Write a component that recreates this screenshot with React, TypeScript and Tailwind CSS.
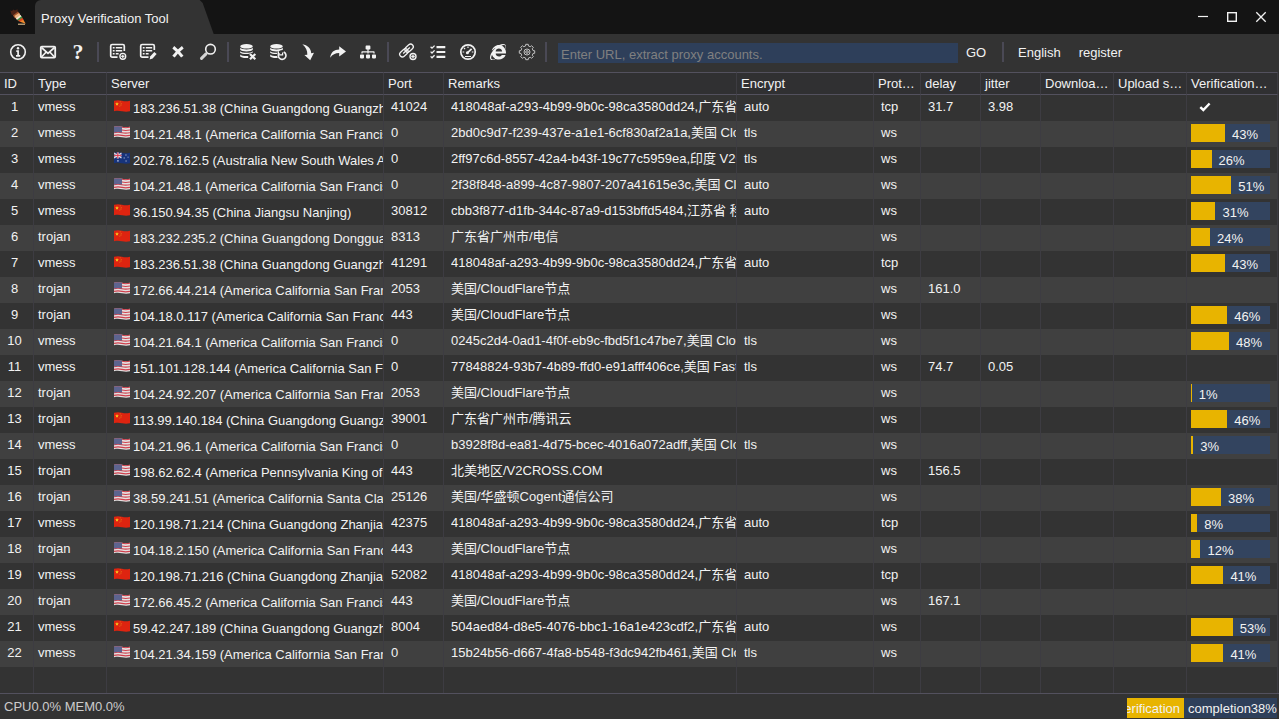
import React from 'react';
import { FaSitemap, FaInternetExplorer } from 'react-icons/fa';

type Country = 'cn' | 'us' | 'au';

interface ProxyRow {
  type: string;
  country: Country;
  server: string;
  port: number;
  remarks: string;
  encrypt?: string;
  protocol: string;
  delay?: string;
  jitter?: string;
  // percentage while the check runs, 'ok' once it has passed
  status?: number | 'ok';
}

const GZ = '418048af-a293-4b99-9b0c-98ca3580dd24,广东省广州市';
const ZJ = '418048af-a293-4b99-9b0c-98ca3580dd24,广东省湛江市';
const SF = '(America California San Francisco)';

const ROWS: ProxyRow[] = [
  { type: 'vmess', country: 'cn', server: '183.236.51.38 (China Guangdong Guangzhou)', port: 41024, remarks: GZ, encrypt: 'auto', protocol: 'tcp', delay: '31.7', jitter: '3.98', status: 'ok' },
  { type: 'vmess', country: 'us', server: `104.21.48.1 ${SF}`, port: 0, remarks: '2bd0c9d7-f239-437e-a1e1-6cf830af2a1a,美国 CloudFlare节点', encrypt: 'tls', protocol: 'ws', status: 43 },
  { type: 'vmess', country: 'au', server: '202.78.162.5 (Australia New South Wales Alexandria)', port: 0, remarks: '2ff97c6d-8557-42a4-b43f-19c77c5959ea,印度 V2CROSS.COM', encrypt: 'tls', protocol: 'ws', status: 26 },
  { type: 'vmess', country: 'us', server: `104.21.48.1 ${SF}`, port: 0, remarks: '2f38f848-a899-4c87-9807-207a41615e3c,美国 CloudFlare节点', encrypt: 'auto', protocol: 'ws', status: 51 },
  { type: 'vmess', country: 'cn', server: '36.150.94.35 (China Jiangsu Nanjing)', port: 30812, remarks: 'cbb3f877-d1fb-344c-87a9-d153bffd5484,江苏省 移动', encrypt: 'auto', protocol: 'ws', status: 31 },
  { type: 'trojan', country: 'cn', server: '183.232.235.2 (China Guangdong Dongguan)', port: 8313, remarks: '广东省广州市/电信', protocol: 'ws', status: 24 },
  { type: 'vmess', country: 'cn', server: '183.236.51.38 (China Guangdong Guangzhou)', port: 41291, remarks: GZ, encrypt: 'auto', protocol: 'tcp', status: 43 },
  { type: 'trojan', country: 'us', server: `172.66.44.214 ${SF}`, port: 2053, remarks: '美国/CloudFlare节点', protocol: 'ws', delay: '161.0' },
  { type: 'trojan', country: 'us', server: `104.18.0.117 ${SF}`, port: 443, remarks: '美国/CloudFlare节点', protocol: 'ws', status: 46 },
  { type: 'vmess', country: 'us', server: `104.21.64.1 ${SF}`, port: 0, remarks: '0245c2d4-0ad1-4f0f-eb9c-fbd5f1c47be7,美国 CloudFlare节点', encrypt: 'tls', protocol: 'ws', status: 48 },
  { type: 'vmess', country: 'us', server: `151.101.128.144 ${SF}`, port: 0, remarks: '77848824-93b7-4b89-ffd0-e91afff406ce,美国 Fastly节点', encrypt: 'tls', protocol: 'ws', delay: '74.7', jitter: '0.05' },
  { type: 'trojan', country: 'us', server: `104.24.92.207 ${SF}`, port: 2053, remarks: '美国/CloudFlare节点', protocol: 'ws', status: 1 },
  { type: 'trojan', country: 'cn', server: '113.99.140.184 (China Guangdong Guangzhou)', port: 39001, remarks: '广东省广州市/腾讯云', protocol: 'ws', status: 46 },
  { type: 'vmess', country: 'us', server: `104.21.96.1 ${SF}`, port: 0, remarks: 'b3928f8d-ea81-4d75-bcec-4016a072adff,美国 CloudFlare节点', encrypt: 'tls', protocol: 'ws', status: 3 },
  { type: 'trojan', country: 'us', server: '198.62.62.4 (America Pennsylvania King of Prussia)', port: 443, remarks: '北美地区/V2CROSS.COM', protocol: 'ws', delay: '156.5' },
  { type: 'trojan', country: 'us', server: '38.59.241.51 (America California Santa Clara)', port: 25126, remarks: '美国/华盛顿Cogent通信公司', protocol: 'ws', status: 38 },
  { type: 'vmess', country: 'cn', server: '120.198.71.214 (China Guangdong Zhanjiang)', port: 42375, remarks: ZJ, encrypt: 'auto', protocol: 'tcp', status: 8 },
  { type: 'trojan', country: 'us', server: `104.18.2.150 ${SF}`, port: 443, remarks: '美国/CloudFlare节点', protocol: 'ws', status: 12 },
  { type: 'vmess', country: 'cn', server: '120.198.71.216 (China Guangdong Zhanjiang)', port: 52082, remarks: ZJ, encrypt: 'auto', protocol: 'tcp', status: 41 },
  { type: 'trojan', country: 'us', server: `172.66.45.2 ${SF}`, port: 443, remarks: '美国/CloudFlare节点', protocol: 'ws', delay: '167.1' },
  { type: 'vmess', country: 'cn', server: '59.42.247.189 (China Guangdong Guangzhou)', port: 8004, remarks: '504aed84-d8e5-4076-bbc1-16a1e423cdf2,广东省广州市', encrypt: 'auto', protocol: 'ws', status: 53 },
  { type: 'vmess', country: 'us', server: `104.21.34.159 ${SF}`, port: 0, remarks: '15b24b56-d667-4fa8-b548-f3dc942fb461,美国 CloudFlare节点', encrypt: 'tls', protocol: 'ws', status: 41 },
];

const COLUMNS = [
  { title: 'ID', width: 'w-[34px]' },
  { title: 'Type', width: 'w-[73px]' },
  { title: 'Server', width: 'w-[277px]' },
  { title: 'Port', width: 'w-[60px]' },
  { title: 'Remarks', width: 'w-[293px]' },
  { title: 'Encrypt', width: 'w-[137px]' },
  { title: 'Protocol', width: 'w-[47px]' },
  { title: 'delay', width: 'w-[60px]' },
  { title: 'jitter', width: 'w-[60px]' },
  { title: 'Download speed', width: 'w-[73px]' },
  { title: 'Upload speed', width: 'w-[73px]' },
  { title: 'Verification…', width: '' },
];

/* ---------- icons, all on a 20px grid ---------- */

const Svg: React.FC<{ children: React.ReactNode }> = ({ children }) => (
  <svg viewBox="0 0 20 20" className="w-5 h-5" fill="none" stroke="currentColor" strokeWidth="1.5" aria-hidden="true">
    {children}
  </svg>
);

const InfoIcon = () => (
  <Svg>
    <circle cx="10" cy="10" r="7.3" strokeWidth="1.6" />
    <circle cx="10" cy="6.3" r="1.2" fill="currentColor" stroke="none" />
    <path d="M8.3 9.2h1.8v4.6M8 13.8h4.2" strokeWidth="1.7" />
  </Svg>
);

const MailIcon = () => (
  <Svg>
    <rect x="2.8" y="4.6" width="14.4" height="11" rx="1" strokeWidth="1.8" />
    <path d="M3.5 5.5L10 11.3l6.5-5.8M3.5 15l4.7-5M16.5 15l-4.700-5" strokeWidth="1.7" />
  </Svg>
);

const ListFrame: React.FC<{ d: string }> = ({ d }) => (
  <>
    <path d={d} strokeWidth="1.7" />
    <path d="M4.8 5.7h1.8M4.8 8.7h1.8M4.8 11.7h1.8M7.8 5.7h6.4M7.8 8.7h6.4M7.8 11.7h2.8" />
  </>
);

const ListAddIcon = () => (
  <Svg>
    <ListFrame d="M9.5 15.2H4.2a1.5 1.5 0 0 1-1.5-1.5V4a1.5 1.5 0 0 1 1.5-1.5h10.6A1.5 1.5 0 0 1 16.3 4v5" />
    <circle cx="14.8" cy="14.3" r="3.600" fill="#333333" stroke="none" />
    <circle cx="14.8" cy="14.3" r="2.9" strokeWidth="1.4" />
    <path d="M14.8 12.700v3.200M13.200 14.3h3.200" strokeWidth="1.2" />
  </Svg>
);

const ListEditIcon = () => (
  <Svg>
    <ListFrame d="M10.5 15.2H4.2a1.5 1.5 0 0 1-1.5-1.5V4a1.5 1.5 0 0 1 1.5-1.5h10.600A1.5 1.5 0 0 1 16.3 4v4" />
    <path d="M11.6 17.400l.7-3.100 4-4.400 2.300 2-4 4.500z" fill="currentColor" stroke="none" />
  </Svg>
);

const CloseBoldIcon = () => (
  <Svg>
    <path d="M5.3 5.3c2.8 2.2 6 5.4 9 9.4M14.8 5.3C11.6 7.6 8.2 11 5.5 14.7" strokeWidth="3" />
  </Svg>
);

const SearchIcon = () => (
  <Svg>
    <circle cx="12.5" cy="7.2" r="4.8" strokeWidth="1.6" />
    <path d="M3.5 16.4L8 11.9" strokeWidth="3" strokeLinecap="round" stroke="#d4d4d4" />
  </Svg>
);

const Database = () => (
  <g fill="currentColor" stroke="none">
    <ellipse cx="8.5" cy="4.3" rx="6.3" ry="2.3" />
    <path d="M2.2 5.8c1.6 2.2 11 2.2 12.6 0v2c-1.6 2.2-11 2.2-12.6 0z" />
    <path d="M2.2 9.2c1.6 2.2 11 2.2 12.6 0v1.3l-3.6 1.3c-3 .6-7.8.3-9-1z" />
    <path d="M2.2 12.4c1 1.3 5 1.8 8 1.5V16c-4 .4-7.3-.4-8-1.4z" />
  </g>
);

const DbRemoveIcon = () => (
  <Svg>
    <Database />
    <path d="M12 12l5.300 5.300M17.300 12L12 17.300" strokeWidth="2.200" />
  </Svg>
);

const DbRefreshIcon = () => (
  <Svg>
    <Database />
    <circle cx="14" cy="13.3" r="5" fill="#333333" stroke="none" />
    <path d="M11.3 11.1a3.8 3.8 0 1 0 4.4-1" strokeWidth="1.6" />
    <path d="M10.4 9.2v3.6H14M14.6 10.6v3" strokeWidth="1.2" />
  </Svg>
);

const ArrowDownIcon = () => (
  <Svg>
    <path d="M4.400 2.200c5 .8 8.800 4.200 8.800 9.100l2.800-.6-3.800 7.500-5.800-5.200 2.900-.3C9.600 8.300 7.700 5 4.400 2.200z" fill="currentColor" stroke="none" />
  </Svg>
);

const ForwardIcon = () => (
  <Svg>
    <path d="M2.2 15.8c.5-5.500 4-8.300 9-8.300V4.200L18 9.400l-6.800 5v-3.300c-4 0-6.700 1.500-9 4.700z" fill="currentColor" stroke="none" />
  </Svg>
);

const LinkAddIcon = () => (
  <Svg>
    <g transform="rotate(-42 8.500 8.500)" strokeWidth="1.300">
      <rect x="0.300" y="5.800" width="9.400" height="5.400" rx="2.700" />
      <rect x="7.300" y="5.800" width="9.400" height="5.400" rx="2.700" />
      <path d="M4 8.500h9" />
    </g>
    <circle cx="15" cy="14.500" r="3.600" fill="#333333" stroke="none" />
    <circle cx="15" cy="14.500" r="3" strokeWidth="1.400" />
    <path d="M15 12.700v3.600M13.200 14.500h3.600" strokeWidth="1.300" />
  </Svg>
);

const ChecklistIcon = () => (
  <Svg>
    <path d="M8.5 5.200h8.800M8.5 10h8.800M8.5 14.800h8.800" strokeWidth="2.200" />
    <path d="M2.600 4.800L4 6.200l2.600-2.600M2.600 9.600L4 11l2.600-2.600M2.600 14.400L4 15.800l2.600-2.600" strokeWidth="1.300" />
  </Svg>
);

const GaugeIcon = () => (
  <Svg>
    <circle cx="10" cy="10" r="7.200" strokeWidth="1.700" />
    <path d="M9.400 10.800l4.200-4" strokeWidth="1.700" />
    <circle cx="9.400" cy="10.800" r="1.500" fill="currentColor" stroke="none" />
    <path d="M4.600 10h1.600M13.800 10h1.600M10 4.600v1.500M6 6l1.100 1.100M7 14.500h6" strokeWidth="1.200" />
  </Svg>
);

const gearPath = (teeth: number, outer: number, inner: number) => {
  const step = (Math.PI * 2) / teeth;
  const points: string[] = [];
  for (let i = 0; i < teeth; i++) {
    [[-0.3, inner], [-0.2, outer], [0.2, outer], [0.3, inner]].forEach(([offset, r]) => {
      const a = (i + offset) * step;
      points.push(`${(10 + r * Math.cos(a)).toFixed(2)} ${(10 + r * Math.sin(a)).toFixed(2)}`);
    });
  }
  return `M${points.join('L')}Z`;
};

const GearIcon = () => (
  <Svg>
    <g strokeWidth="0.9" stroke="#d0d0d0">
      <path d={gearPath(8, 7.8, 6.2)} strokeLinejoin="round" />
      <circle cx="10" cy="10" r="3" />
      <circle cx="10" cy="10" r="1.3" />
    </g>
  </Svg>
);

const Logo = () => (
  <svg viewBox="0 0 16 16" className="w-4 h-4" aria-hidden="true">
    <path d="M.3 1.500L2 2l1.500-1.500L5 1.500 7.500.3 7.800 3 4.500 7 1.500 5.500z" fill="#4a2216" />
    <path d="M3 6.500l5-4L10 5 5 9.500z" fill="#a4552c" />
    <path d="M4.500 7L9 4l2 3-4.500 3.500z" fill="#ecb483" />
    <path d="M6 9.500L10.500 6l1.300 2L7.500 11.200z" fill="#f3ead8" />
    <path d="M7 10.700l4.500-3.500 1.200 2-4 3z" fill="#3f8f42" />
    <path d="M8 11.700l4.300-3 1.300 2.300-3.100 2z" fill="#e2451f" />
    <path d="M10 12.800l3.200-2.300 2.500 4.300z" fill="#f08a2c" />
    <path d="M8 15.200h7" stroke="#f2d09a" strokeWidth="1" />
  </svg>
);

const CheckIcon = () => (
  <svg viewBox="0 0 12 10" className="w-3 h-2.5" aria-label="passed" role="img">
    <path d="M1.300 5.200l3 2.800 6.300-6.500" fill="none" stroke="#ffffff" strokeWidth="2.400" />
  </svg>
);

const Flag: React.FC<{ country: Country }> = ({ country }) => (
  <svg viewBox="0 0 16 12" className="w-4 h-3 mb-0.5 shrink-0" role="img" aria-label={country}>
    {country === 'cn' && (
      <>
        <path d="M0 .8C3 0 5 0 8 .8s5 .6 8 0v10.400c-3 .7-5 .6-8 0s-5-.8-8 0z" fill="#de2410" />
        <path d="M3 2l.5 1.300 1.400.1-1.100.9.4 1.300L3 4.900l-1.200.7.4-1.300-1.100-.9 1.400-.1z" fill="#f8c61e" />
        <path d="M5.800 1.500h.8v.8h-.8zM6.800 3h.8v.8h-.8zM6.600 4.600h.8v.8h-.8zM5.400 5.700h.8v.8h-.8z" fill="#e8901a" />
      </>
    )}
    {country === 'us' && (
      <>
        <path d="M0 .8C3 0 5 0 8 .8s5 .6 8 0v10.400c-3 .7-5 .6-8 0s-5-.8-8 0z" fill="#e4e0e0" />
        <path d="M0 1.300c3-.8 5-.8 8 0s5 .6 8 0M0 4c3-.8 5-.8 8 0s5 .6 8 0M0 6.700c3-.8 5-.8 8 0s5 .6 8 0M0 9.400c3-.8 5-.8 8 0s5 .6 8 0" fill="none" stroke="#cf3f4c" strokeWidth="1.100" />
        <path d="M0 .8C3 0 5 0 8 .8v5.700c-3-.8-5-.8-8 0z" fill="#5d648f" />
      </>
    )}
    {country === 'au' && (
      <>
        <path d="M0 .8C3 0 5 0 8 .8s5 .6 8 0v10.400c-3 .7-5 .6-8 0s-5-.8-8 0z" fill="#17347c" />
        <path d="M0 1l7.500 5M7.500 1L0 6" stroke="#e6dce4" strokeWidth="1.200" />
        <path d="M3.800.5v6M0 3.400h7.500" stroke="#e6dce4" strokeWidth="2" />
        <path d="M3.800.5v6M0 3.400h7.500" stroke="#d8364a" strokeWidth="1" />
        <path d="M3.300 8.200h1.300v1.300H3.300zM11.500 2.500h.9v.9h-.9zM13.600 4.700h.9v.9h-.9zM9.700 5.500h.9v.9h-.9zM11.600 8.600h.9v.9h-.9z" fill="#e8ecf6" />
      </>
    )}
  </svg>
);

/* ---------- toolbar ---------- */

const ToolButton: React.FC<{ label: string; narrow?: boolean; children: React.ReactNode }> = ({ label, narrow, children }) => (
  <button
    type="button"
    aria-label={label}
    className={`${narrow ? 'w-7' : 'w-[30px]'} h-[30px] shrink-0 flex items-center justify-center hover:bg-white/10`}
  >
    {children}
  </button>
);

const Separator = () => (
  <div className="w-2.5 shrink-0 flex justify-center">
    <div className="w-0.5 h-5 bg-[#4a4955]" />
  </div>
);

const Toolbar = () => (
  <div className="flex items-center shrink-0 h-[38px] pl-[3px] pb-0.5 bg-[#333333]">
    <ToolButton label="About"><InfoIcon /></ToolButton>
    <ToolButton label="Mail"><MailIcon /></ToolButton>
    <ToolButton label="Help">
      <span className="font-['Liberation_Serif',serif] font-bold text-[22px] leading-5">?</span>
    </ToolButton>
    <Separator />
    <ToolButton label="Add"><ListAddIcon /></ToolButton>
    <ToolButton label="Edit"><ListEditIcon /></ToolButton>
    <ToolButton label="Delete"><CloseBoldIcon /></ToolButton>
    <ToolButton label="Search"><SearchIcon /></ToolButton>
    <Separator />
    <ToolButton label="Clear database"><DbRemoveIcon /></ToolButton>
    <ToolButton label="Reload database"><DbRefreshIcon /></ToolButton>
    <ToolButton label="Import"><ArrowDownIcon /></ToolButton>
    <ToolButton label="Export"><ForwardIcon /></ToolButton>
    <ToolButton label="Network"><FaSitemap className="w-4 h-4" /></ToolButton>
    <Separator />
    <ToolButton label="Add subscription"><LinkAddIcon /></ToolButton>
    <ToolButton label="Verify all"><ChecklistIcon /></ToolButton>
    <ToolButton label="Speed test"><GaugeIcon /></ToolButton>
    <ToolButton label="Browser"><FaInternetExplorer className="w-4 h-4" /></ToolButton>
    <ToolButton label="Settings" narrow><GearIcon /></ToolButton>
    <Separator />
    <input
      type="text"
      aria-label="URL"
      placeholder="Enter URL, extract proxy accounts."
      className="w-[400px] h-5 ml-[7px] mt-0.5 px-[3px] pt-0.5 bg-[#2e3f5a] text-[#f2f2f2] placeholder:text-[#808080] outline-none"
    />
    <button type="button" className="ml-2 mt-0.5 w-5">GO</button>
    <div className="w-3 shrink-0" />
    <Separator />
    <button type="button" className="ml-2.5 mt-0.5">English</button>
    <button type="button" className="ml-[18px] mt-0.5">register</button>
  </div>
);

/* ---------- table ---------- */

const ProgressCell: React.FC<{ value: number }> = ({ value }) => (
  <div
    role="progressbar"
    aria-valuenow={value}
    aria-label="Verification status"
    className="flex h-[18px] ml-1 mr-[7px] bg-[#33445f] text-[#f2f2f2]"
  >
    <div className="shrink-0 h-full bg-[#e8b400]" style={{ width: `${value}%` }} />
    <span className="pl-[7px] pt-0.5 leading-[18px]">{value}%</span>
  </div>
);

const cell = 'border-r border-[#3d3c42] pl-[7px] pb-0.5 overflow-hidden whitespace-nowrap';

const ProxyTable = () => (
  <table className="w-full h-full table-fixed border-separate border-spacing-0 text-left">
    <colgroup>
      {COLUMNS.map((c) => (
        <col key={c.title} className={c.width} />
      ))}
    </colgroup>
    <thead>
      <tr className="h-[23px] bg-[#303032]">
        {COLUMNS.map((c) => (
          <th key={c.title} className="h-[23px] border-y border-r border-y-[#53515e] border-r-[#3d3c42] pl-1 pr-0.5 font-normal truncate">
            {c.title}
          </th>
        ))}
      </tr>
    </thead>
    <tbody>
      {ROWS.map((row, i) => (
        <tr key={i} className="h-[26px] odd:bg-[#333333] even:bg-[#404040]">
          <td className="border-r border-[#3d3c42] pr-1 pb-0.5 text-center">{i + 1}</td>
          <td className="border-r border-[#3d3c42] pl-1 pb-0.5">{row.type}</td>
          <td className={cell}>
            <div className="flex items-center gap-[3px]">
              <Flag country={row.country} />
              <span className="flex-1 min-w-0 overflow-hidden pt-[3px]">{row.server}</span>
            </div>
          </td>
          <td className={cell}>{row.port}</td>
          <td className={cell}>
            <div className="overflow-hidden">{row.remarks}</div>
          </td>
          <td className={cell}>{row.encrypt}</td>
          <td className={cell}>{row.protocol}</td>
          <td className={cell}>{row.delay}</td>
          <td className={cell}>{row.jitter}</td>
          <td className={cell} />
          <td className={cell} />
          <td className="border-r border-[#3d3c42] pb-0.5">
            {row.status === 'ok' && <div className="pl-3"><CheckIcon /></div>}
            {typeof row.status === 'number' && <ProgressCell value={row.status} />}
          </td>
        </tr>
      ))}
      {/* empty area under the last entry keeps the column lines */}
      <tr className="bg-[#333333]">
        {COLUMNS.map((c) => (
          <td key={c.title} className="border-r border-[#3d3c42]" />
        ))}
      </tr>
    </tbody>
  </table>
);

const TitleBar = () => (
  <header className="flex items-center shrink-0 h-[34px] bg-[#141414]">
    <div className="w-[35px] flex justify-center"><Logo /></div>
    <div className="h-full flex items-center pl-1.5 pr-[45px] pt-[3px] bg-[#333333] rounded-tl-md [clip-path:polygon(0_0,calc(100%-14px)_0,calc(100%-11px)_3px,100%_100%,0_100%)]">
      <h1>Proxy Verification Tool</h1>
    </div>
    <div className="flex-1" />
    <button type="button" aria-label="Minimize" className="w-[29px] h-full flex items-center justify-center">
      <svg viewBox="0 0 12 12" className="w-3 h-3"><path d="M1 5.500h10" stroke="#f2f2f2" strokeWidth="1.200" /></svg>
    </button>
    <button type="button" aria-label="Maximize" className="w-[29px] h-full flex items-center justify-center">
      <svg viewBox="0 0 12 12" className="w-3 h-3"><rect x="1.700" y="1.700" width="8.600" height="8.600" fill="none" stroke="#f2f2f2" strokeWidth="1.400" /></svg>
    </button>
    <button type="button" aria-label="Close" className="w-[29px] mr-1 h-full flex items-center justify-center">
      <svg viewBox="0 0 12 12" className="w-3 h-3"><path d="M1.300 1.300l9.400 9.400M10.700 1.300l-9.400 9.400" stroke="#f2f2f2" strokeWidth="1.300" /></svg>
    </button>
  </header>
);

const StatusBar = () => (
  <footer className="flex items-center justify-between shrink-0 h-[26px] border-t border-[#53515e] bg-[#333333] pl-1 pr-0.5">
    <span className="text-[#cccccc]">CPU0.0% MEM0.0%</span>
    <div
      role="progressbar"
      aria-valuenow={38}
      aria-label="Verification completion"
      className="flex w-[150px] h-5 mt-0.5 bg-[#2e3f5a] whitespace-nowrap leading-[22px]"
    >
      <div className="h-full flex justify-end pr-1 overflow-hidden bg-[#e8b400]" style={{ width: '38%' }}>
        <span>Verification</span>
      </div>
      <span className="pl-1">completion38%</span>
    </div>
  </footer>
);

export default function App() {
  return (
    <div className="h-screen min-h-[700px] flex flex-col bg-[#333333] text-[#f2f2f2] text-[13px] leading-4 font-['Liberation_Sans','Noto_Sans_CJK_SC',sans-serif]">
      <TitleBar />
      <Toolbar />
      <main className="flex-1 min-h-0 pr-px">
        <ProxyTable />
      </main>
      <StatusBar />
    </div>
  );
}
